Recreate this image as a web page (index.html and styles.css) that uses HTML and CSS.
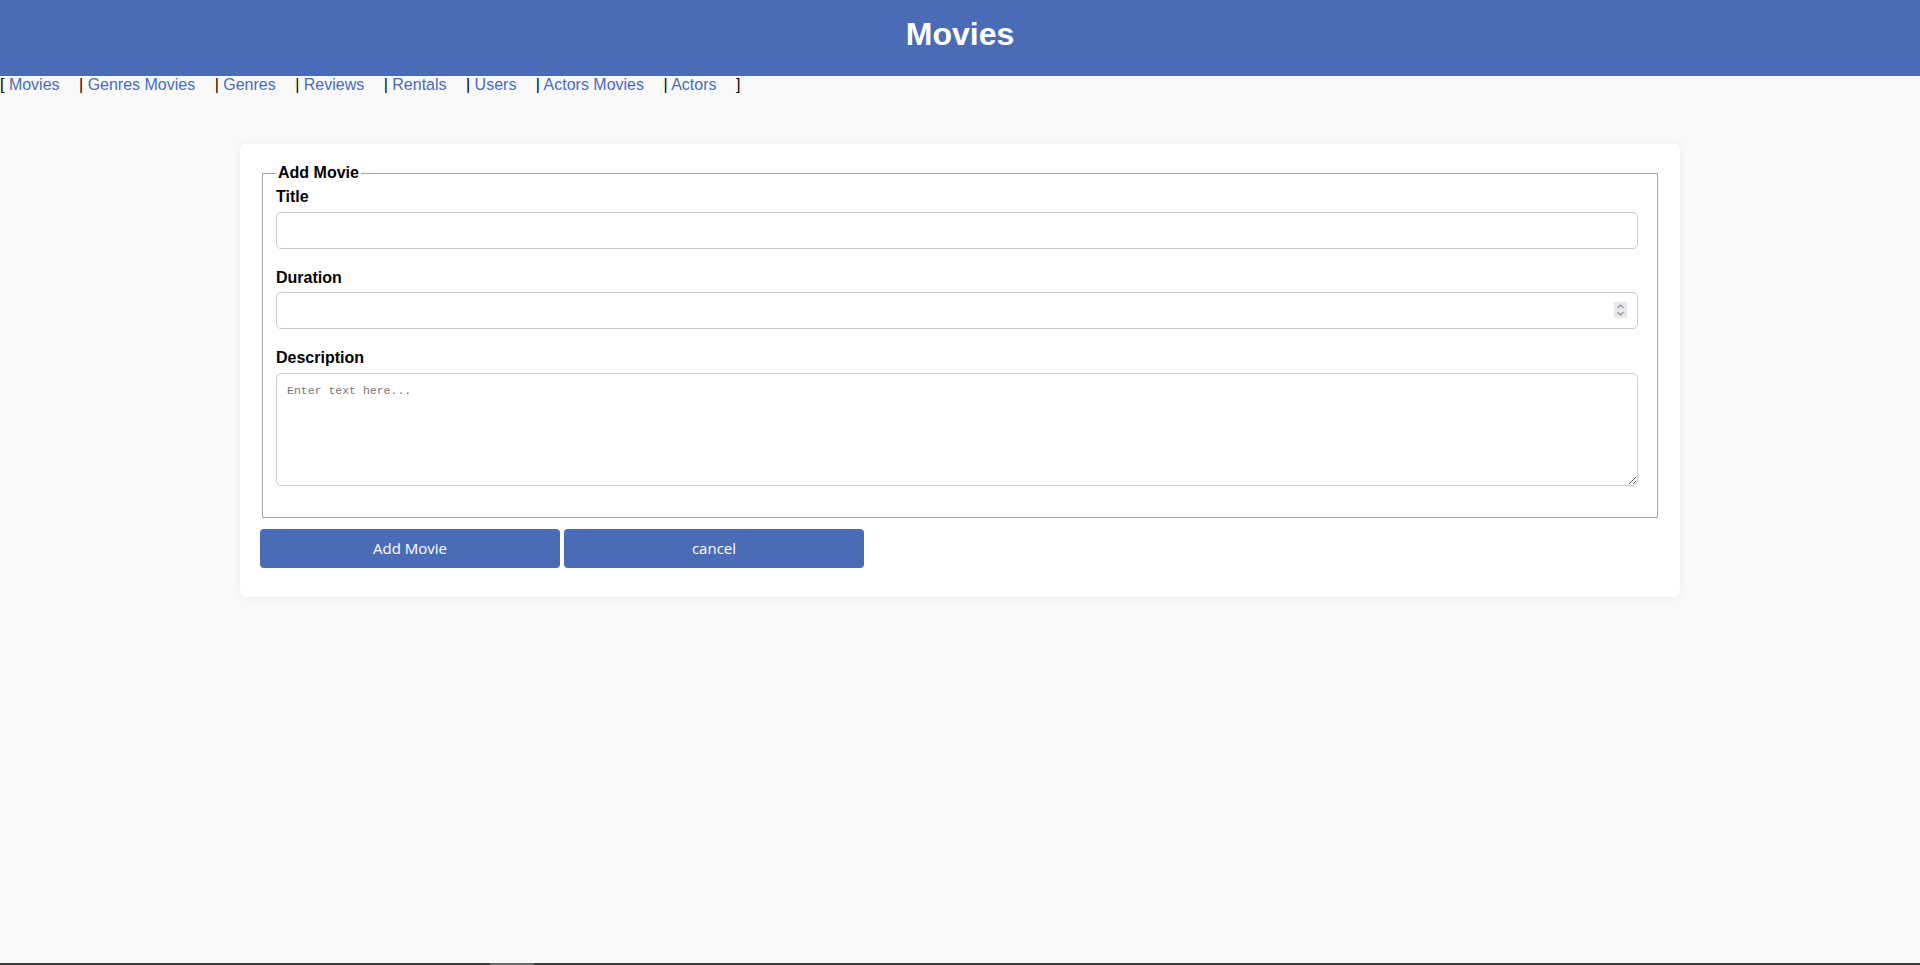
FILE: index.html
```html
<!DOCTYPE html>
<html lang="en">
<head>
<meta charset="utf-8">
<title>Movies</title>
<link rel="stylesheet" href="styles.css">
</head>
<body>
<header class="site-header">
  <h1 class="site-title">Movies</h1>
</header>
<nav class="nav">[ <a href="#">Movies</a> | <a href="#">Genres Movies</a> | <a href="#">Genres</a> | <a href="#">Reviews</a> | <a href="#">Rentals</a> | <a href="#">Users</a> | <a href="#">Actors Movies</a> | <a href="#">Actors</a> ]</nav>
<main class="card">
  <form class="form">
    <fieldset class="fieldset">
      <legend class="legend">Add Movie</legend>
      <label class="label" for="title">Title</label>
      <input class="field" id="title" type="text">
      <label class="label" for="duration">Duration</label>
      <div class="number-wrap">
        <input class="field field-number" id="duration" type="number">
        <span class="spin" aria-hidden="true">
          <svg width="11" height="14" viewBox="0 0 11 14"><path d="M2.5 5 L5.5 2 L8.5 5" fill="none" stroke="#8a8a8a" stroke-width="1.1"/><path d="M2.5 9 L5.5 12 L8.5 9" fill="none" stroke="#8a8a8a" stroke-width="1.1"/></svg>
        </span>
      </div>
      <label class="label" for="description">Description</label>
      <textarea class="area" id="description" placeholder="Enter text here..."></textarea>
    </fieldset>
    <div class="actions">
      <button class="btn" type="button">Add Movie</button>
      <button class="btn" type="button">cancel</button>
    </div>
  </form>
</main>
<div class="bottom-strip"><span class="strip-thumb"></span></div>
</body>
</html>
```
FILE: styles.css
```css
html, body {
  margin: 0;
  padding: 0;
}
body {
  background: #f9f9f9;
  font-family: "Liberation Sans", Arial, sans-serif;
  font-size: 16px;
  color: #000;
  min-height: 965px;
}
.site-header {
  background: #4a6cb7;
  height: 76px;
  box-sizing: border-box;
  padding-top: 16px;
  text-align: center;
}
.site-title {
  margin: 0;
  color: #fff;
  font-size: 32px;
  font-weight: bold;
  line-height: 37px;
}
.nav {
  line-height: 18.4px;
  color: #000;
  white-space: nowrap;
}
.nav a {
  color: #4a6cb7;
  text-decoration: none;
  margin-right: 15px;
}
.card {
  display: block;
  width: 1440px;
  margin: 50px auto 0;
  box-sizing: border-box;
  padding: 20px;
  background: #fff;
  border-radius: 6px;
  box-shadow: 0 0 8px rgba(0, 0, 0, 0.06);
}
.form {
  margin: 0;
}
.fieldset {
  margin: 0 2px;
  padding: 5.6px 13px 11px;
  border: 1px solid #a3a3a3;
  min-width: 0;
}
.legend {
  font-weight: bold;
  font-size: 16px;
  line-height: 18.4px;
  padding: 0 2px;
}
.label {
  display: block;
  font-weight: bold;
  line-height: 18.4px;
  margin-bottom: 5px;
}
.field {
  display: block;
  width: calc(100% - 6px);
  height: 37px;
  box-sizing: border-box;
  margin: 0 0 20px;
  padding: 0 10px;
  border: 1px solid #cccccc;
  border-radius: 5px;
  background: #fff;
  font-family: "Liberation Sans", Arial, sans-serif;
  font-size: 14px;
  outline: none;
}
.number-wrap {
  position: relative;
}
.field-number {
  -moz-appearance: textfield;
}
.field-number::-webkit-inner-spin-button,
.field-number::-webkit-outer-spin-button {
  -webkit-appearance: none;
  margin: 0;
}
.spin {
  position: absolute;
  top: 10px;
  right: 17px;
  width: 13px;
  height: 16px;
  background: #e9e9ed;
  display: flex;
  align-items: center;
  justify-content: center;
}
.area {
  display: block;
  width: calc(100% - 6px);
  height: 113px;
  box-sizing: border-box;
  margin: 0 0 20px;
  padding: 10px;
  border: 1px solid #cccccc;
  border-radius: 5px;
  font-family: "Liberation Mono", "DejaVu Sans Mono", monospace;
  font-size: 11.5px;
  line-height: 14px;
  outline: none;
}
.area::placeholder {
  color: #767676;
}
.actions {
  display: flex;
  gap: 4px;
  margin: 11px 0 9px;
}
.btn {
  width: 300px;
  height: 39px;
  border: 0;
  border-radius: 4px;
  background: #4a6cb7;
  color: #fff;
  font-family: "Open Sans", "Noto Sans", sans-serif;
  font-size: 15px;
  padding: 0;
  cursor: pointer;
}
.bottom-strip {
  position: fixed;
  left: 0;
  right: 0;
  bottom: 0;
  height: 2px;
  background: #3c3c3c;
}
.strip-thumb {
  position: absolute;
  left: 490px;
  top: 0;
  width: 44px;
  height: 2px;
  background: #6a6a6a;
}
```
